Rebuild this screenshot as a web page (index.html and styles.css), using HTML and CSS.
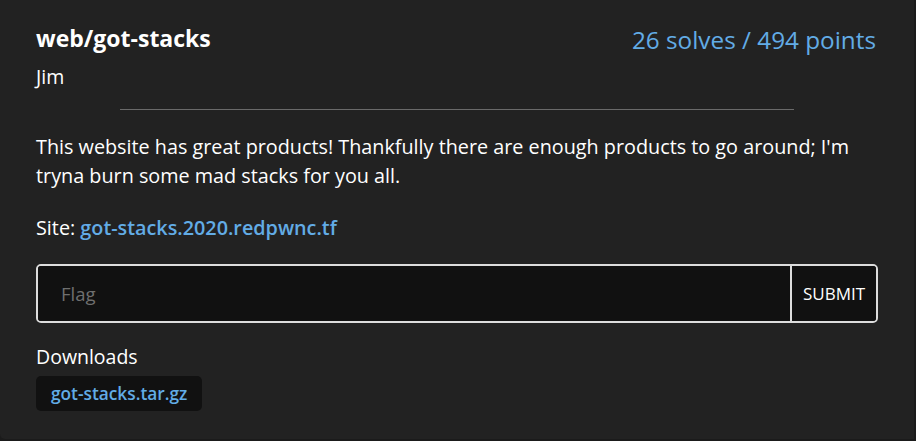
FILE: index.html
```html
<!DOCTYPE html>
<html>
<head>
<meta charset="utf-8">
<link rel="stylesheet" href="styles.css">
</head>
<body>
<div class="card">
  <div class="header">
    <div class="titles">
      <div class="title">web/got-stacks</div>
      <div class="author">Jim</div>
    </div>
    <div class="stats">26 solves / 494 points</div>
  </div>
  <hr class="divider">
  <p class="desc">This website has great products! Thankfully there are enough products to go around; I'm tryna burn some mad stacks for you all.</p>
  <p class="site">Site: <a class="link" href="#">got-stacks.2020.redpwnc.tf</a></p>
  <form class="flag-form">
    <input class="flag-input" type="text" placeholder="Flag">
    <button class="submit" type="button">SUBMIT</button>
  </form>
  <div class="downloads-label">Downloads</div>
  <div class="downloads">
    <a class="chip" href="#">got-stacks.tar.gz</a>
  </div>
</div>
</body>
</html>
```
FILE: styles.css
```css
html, body {
  margin: 0;
  padding: 0;
  background: #1b1b1b;
}
body {
  font-family: "Open Sans", "Noto Sans", sans-serif;
  color: #fff;
  width: 916px;
  height: 441px;
  overflow: hidden;
}
.card {
  box-sizing: border-box;
  width: 914px;
  height: 439px;
  background: #222222;
  border-radius: 0 0 0 5px;
  padding: 23px 36px 0 36px;
}
.header {
  display: flex;
  justify-content: space-between;
  align-items: flex-start;
}
.title {
  font-size: 23px;
  font-weight: 700;
  line-height: 30px;
}
.author {
  font-size: 19.5px;
  line-height: 24px;
  margin-top: 12px;
}
.stats {
  font-size: 24.3px;
  font-weight: 500;
  line-height: 32px;
  color: #62ace6;
  margin-top: 1px;
  margin-right: 2px;
}
.divider {
  width: 80%;
  margin: 20px auto 0;
  border: 0;
  height: 1px;
  background: #6a6a6a;
}
.desc {
  font-size: 19.8px;
  line-height: 29px;
  margin: 22px 0 0;
}
.site {
  font-size: 19.8px;
  line-height: 29px;
  margin: 23px 0 0;
}
.link {
  color: #62ace6;
  text-decoration: none;
  font-weight: 600;
}
.flag-form {
  display: flex;
  margin-top: 22px;
  height: 59px;
  box-sizing: border-box;
  border: 2px solid #dddddd;
  border-radius: 5px;
  background: #111111;
  overflow: hidden;
}
.flag-input {
  flex: 1;
  min-width: 0;
  background: #111111;
  border: 0;
  outline: none;
  color: #fff;
  font-family: inherit;
  font-size: 18.5px;
  padding: 0 23px;
}
.flag-input::placeholder {
  color: #6f6f6f;
}
.submit {
  box-sizing: border-box;
  background: #111111;
  border: 0;
  border-left: 2px solid #dddddd;
  color: #fff;
  font-family: inherit;
  font-size: 17px;
  padding: 0;
  width: 86px;
}
.downloads-label {
  font-size: 19.5px;
  line-height: 24px;
  margin-top: 22px;
}
.downloads {
  display: flex;
  margin-top: 7px;
}
.chip {
  background: #111111;
  color: #62ace6;
  font-weight: 600;
  font-size: 17.3px;
  text-decoration: none;
  border-radius: 5px;
  padding: 0 15px;
  height: 35px;
  line-height: 35px;
}
```
